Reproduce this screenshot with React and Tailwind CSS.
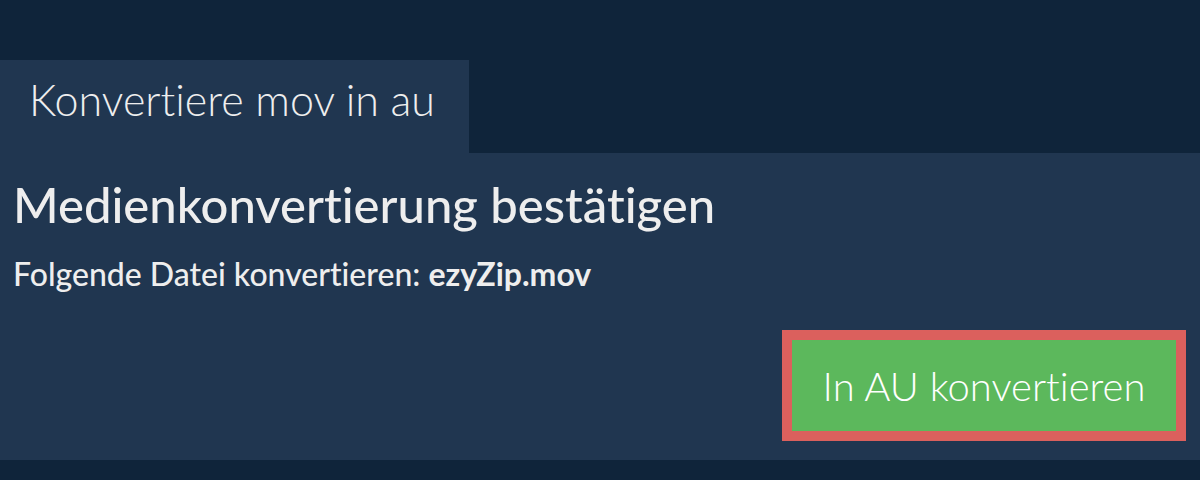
import React from "react";

export default function App() {
  return (
    <div
      className="w-[1200px] h-[480px] bg-[#0f243a] pt-[60px] text-[#eeeeee] [font-variant-ligatures:none]"
      style={{ fontFamily: "Lato, 'Noto Sans', sans-serif" }}
    >
      {/* Tab */}
      <div className="w-[469px] h-[93px] bg-[#203650] pl-[29px] pt-[14px]">
        <h1 className="text-[43px] font-light leading-[1.2]">Konvertiere mov in au</h1>
      </div>

      {/* Panel */}
      <div className="h-[307px] bg-[#203650] px-[13px] pt-[22px]">
        <h2 className="text-[49px] font-medium leading-[1.2]">
          Medienkonvertierung bestätigen
        </h2>
        <p className="mt-[21px] text-[32px] font-medium leading-[1.2]">
          Folgende Datei konvertieren: <b className="font-bold">ezyZip.mov</b>
        </p>
        <div className="flex justify-end pr-[1px] mt-[37px]">
          <button className="w-[404px] h-[111px] border-[10px] border-[#db605d] bg-[#5cb85c] text-white text-[40px] font-light leading-none">
            In AU konvertieren
          </button>
        </div>
      </div>
    </div>
  );
}
